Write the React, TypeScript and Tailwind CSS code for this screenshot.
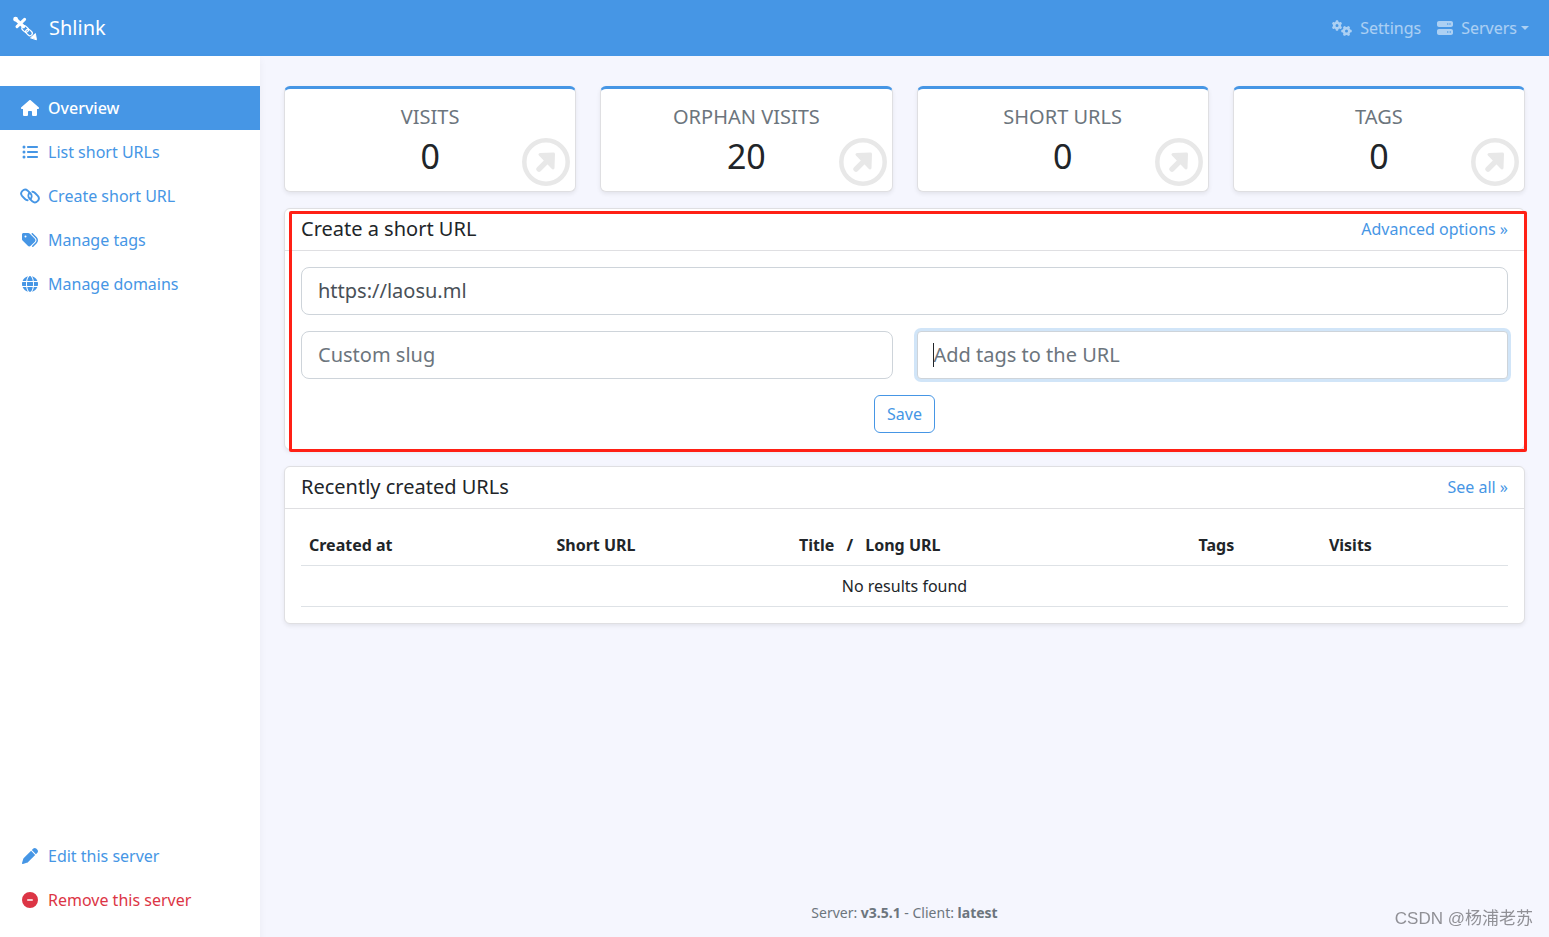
import { FaHouse, FaListUl, FaTags, FaGlobe, FaPen, FaCircleMinus, FaGears, FaServer } from 'react-icons/fa6';

function ChainIcon({ className }: { className?: string }) {
  return (
    <svg viewBox="0 0 20 16" className={className} fill="none" stroke="currentColor" strokeWidth="1.9" strokeLinecap="round" aria-hidden="true">
      <path d="M7.6 12.2a4 4 0 0 1-2.6-1.2L2.2 8.2A3.9 3.9 0 0 1 7.7 2.7l2.8 2.8a3.9 3.9 0 0 1 0 5.5" />
      <path d="M12.4 3.8a4 4 0 0 1 2.6 1.2l2.8 2.8a3.9 3.9 0 0 1-5.5 5.5L9.5 10.5a3.9 3.9 0 0 1 0-5.5" />
    </svg>
  );
}

function ArrowCircle({ className }: { className?: string }) {
  return (
    <svg viewBox="0 0 48 48" className={className} aria-hidden="true">
      <circle cx="24" cy="24" r="21.7" fill="none" stroke="currentColor" strokeWidth="4.5" />
      <path d="M18 16.5 31.5 16 31 30Z" fill="currentColor" stroke="currentColor" strokeWidth="3" strokeLinejoin="round" />
      <path d="M17 31.2 26 22.2" stroke="currentColor" strokeWidth="5.4" strokeLinecap="round" />
    </svg>
  );
}

const navItems = [
  { label: 'Overview', icon: FaHouse, active: true },
  { label: 'List short URLs', icon: FaListUl, active: false },
  { label: 'Create short URL', icon: ChainIcon, active: false },
  { label: 'Manage tags', icon: FaTags, active: false },
  { label: 'Manage domains', icon: FaGlobe, active: false },
];

const stats = [
  { label: 'Visits', value: 0 },
  { label: 'Orphan visits', value: 20 },
  { label: 'Short URLs', value: 0 },
  { label: 'Tags', value: 0 },
];

const card = 'rounded-md border border-[#dfdfe2] bg-white shadow-[0_2px_4px_rgba(0,0,0,0.075)]';
const cardHeader = 'flex h-[42px] items-center justify-between border-b border-[#dfdfe2] px-4 pb-0.5';
const field = 'h-12 w-full border border-[#ced4da] bg-white px-4 pb-0.5 text-xl text-[#495057] placeholder:text-[#6c757d] outline-none';

function ShlinkLogo() {
  return (
    <svg viewBox="0 0 26 26" className="size-[26px]" fill="none" stroke="white" strokeLinecap="round" aria-hidden="true">
      <path d="M3.5 4 11.5 11.5" strokeWidth="3.4" />
      <path d="M12.6 4.4 5 11.6" strokeWidth="3" />
      <circle cx="3.6" cy="4.2" r="1.6" fill="white" strokeWidth="1.6" />
      <rect x="-3.6" y="-2.4" width="7.2" height="4.8" rx="2.4" strokeWidth="1.2" transform="translate(13.2 14) rotate(43)" />
      <rect x="-3.6" y="-2.4" width="7.2" height="4.8" rx="2.4" strokeWidth="1.2" transform="translate(17 17.4) rotate(43)" />
      <path d="M18.8 22.6 23.4 18.6 24.4 24.4Z" fill="white" strokeWidth="1" strokeLinejoin="round" />
    </svg>
  );
}

function Sidebar() {
  return (
    <aside className="flex w-[260px] shrink-0 flex-col bg-white pt-[30px] pb-[15px] shadow-[0_4px_8px_rgba(0,0,0,0.05)]">
      <nav className="flex grow flex-col">
        {navItems.map(({ label, icon: Icon, active }) => (
          <a key={label} href="#" className={active
            ? 'flex h-11 items-center gap-2 bg-[#4696e5] px-5 font-medium text-white'
            : 'flex h-11 items-center gap-2 px-5 text-[#4696e5]'}>
            <Icon className="h-4 w-5" />
            {label}
          </a>
        ))}
        <a href="#" className="mt-auto flex h-11 items-center gap-2 px-5 text-[#4696e5]">
          <FaPen className="h-4 w-5" />
          Edit this server
        </a>
        <button type="button" className="flex h-11 items-center gap-2 px-5 text-[#dc3545]">
          <FaCircleMinus className="h-4 w-5" />
          Remove this server
        </button>
      </nav>
    </aside>
  );
}

export default function App() {
  return (
    <div className="flex min-h-screen flex-col bg-[#f5f6fe] font-['Noto_Sans','Noto_Sans_CJK_SC',sans-serif] text-base text-[#212529]">
      <header className="flex h-14 items-center justify-between bg-[#4696e5] pr-5 pl-3">
        <a href="#" className="flex items-center gap-[11px] text-xl text-white">
          <ShlinkLogo />
          Shlink
        </a>
        <nav className="flex items-center gap-4 text-white/55">
          <a href="#" className="flex items-center gap-2">
            <FaGears className="h-4 w-5" />
            Settings
          </a>
          <button type="button" className="flex items-center gap-2">
            <FaServer className="size-4" />
            <span className="flex items-center gap-1">
              Servers
              <span className="border-x-4 border-t-4 border-x-transparent border-t-current" />
            </span>
          </button>
        </nav>
      </header>

      <div className="flex grow">
        <Sidebar />
        <div className="flex min-w-0 grow flex-col px-6 pt-[30px] pb-3">
          <main className="flex grow flex-col gap-4">
            <div className="grid grid-cols-4 gap-6">
              {stats.map(({ label, value }) => (
                <a key={label} href="#" className="relative flex h-[106px] flex-col items-center rounded-md border border-t-3 border-[#dfdfe2] border-t-[#4696e5] bg-white pt-4 shadow-[0_2px_4px_rgba(0,0,0,0.075)]">
                  <span className="text-xl leading-6 text-[#6c757d] uppercase">{label}</span>
                  <span className="mt-2 text-[34px] leading-[38px]">{value}</span>
                  <ArrowCircle className="absolute right-[5px] bottom-[5px] size-12 text-[#e8e8e8]" />
                </a>
              ))}
            </div>

            <section className={`relative ${card}`}>
              <div className={cardHeader}>
                <h5 className="text-xl">Create a short URL</h5>
                <a href="#" className="text-[#4696e5]">Advanced options »</a>
              </div>
              <form className="flex flex-col gap-4 p-4">
                <input aria-label="URL to be shortened" defaultValue="https://laosu.ml" className={`rounded-lg ${field}`} />
                <div className="grid grid-cols-2 gap-6">
                  <input aria-label="Custom slug" placeholder="Custom slug" className={`rounded-lg ${field}`} />
                  <div className="relative">
                    <input aria-label="Tags" placeholder="Add tags to the URL" className={`rounded shadow-[0_0_0_3px_rgba(70,150,229,0.25)] ${field}`} />
                    <span className="absolute top-3 left-4 h-6 w-px bg-[#212529]" />
                  </div>
                </div>
                <button type="button" className="h-[38px] self-center rounded-md border border-[#4696e5] px-3 text-[#4696e5]">Save</button>
              </form>
              <div className="pointer-events-none absolute top-[2px] -right-[3px] -bottom-[3px] left-1 rounded-xs border-3 border-[#ff2015]" />
            </section>

            <section className={card}>
              <div className={cardHeader}>
                <h5 className="text-xl">Recently created URLs</h5>
                <a href="#" className="text-[#4696e5]">See all »</a>
              </div>
              <div className="p-4">
                <table className="w-full table-fixed border-collapse text-left">
                  <thead>
                    <tr className="h-10 border-b border-[#dee2e6]">
                      <th className="w-[20.5%] px-2 font-bold">Created at</th>
                      <th className="w-[20.1%] px-2 font-bold">Short URL</th>
                      <th className="w-[33.1%] px-2 font-bold">
                        <span className="mr-2">Title</span> / <span className="ml-2">Long URL</span>
                      </th>
                      <th className="w-[10.8%] px-2 font-bold">Tags</th>
                      <th className="px-2 font-bold">Visits</th>
                    </tr>
                  </thead>
                  <tbody>
                    <tr className="h-[41px] border-b border-[#dee2e6]">
                      <td colSpan={5} className="text-center">No results found</td>
                    </tr>
                  </tbody>
                </table>
              </div>
            </section>
          </main>
          <footer className="text-center text-sm leading-6 text-[#6c757d]">
            Server: <b>v3.5.1</b> - Client: <b>latest</b>
          </footer>
        </div>
      </div>
      <div className="fixed right-4 bottom-1 font-['Liberation_Sans','Noto_Sans_CJK_SC',sans-serif] text-[17px] leading-7 text-[#909096]">CSDN @杨浦老苏</div>
    </div>
  );
}
